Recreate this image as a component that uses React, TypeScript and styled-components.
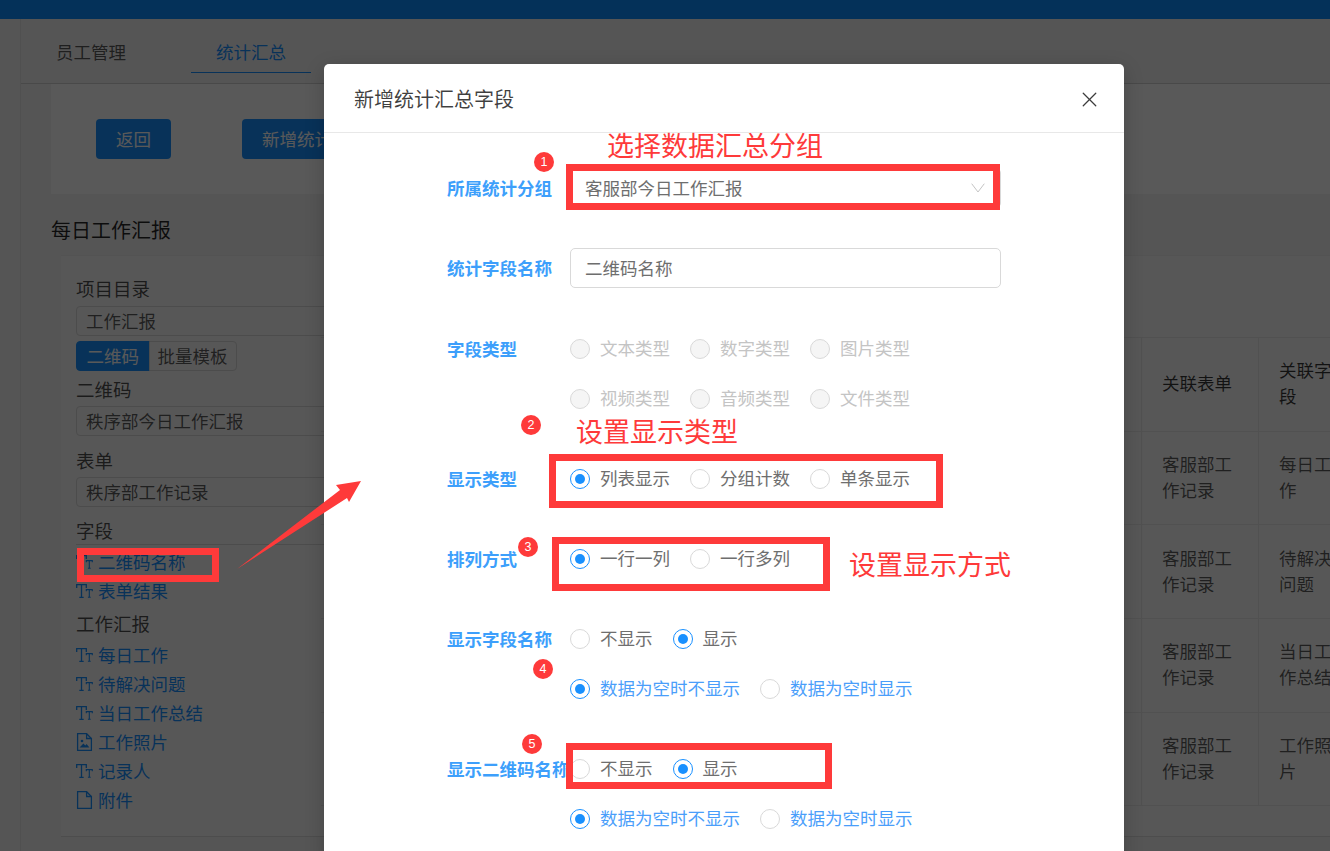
import React from 'react';
import styled, { createGlobalStyle } from 'styled-components';
import { X } from 'lucide-react';

const FONT = '"Noto Sans CJK SC", "Noto Sans", sans-serif';
const RED = '#fe3a3a';
const PRIMARY = '#1890ff';

const GlobalStyle = createGlobalStyle`
  html, body {
    margin: 0;
    padding: 0;
    background: #f4f4f4;
    font-family: ${FONT};
  }
  * { box-sizing: border-box; }
`;

const Page = styled.div`
  position: relative;
  width: 1330px;
  height: 851px;
  overflow: hidden;
  background: #f4f4f4;
  color: rgba(0, 0, 0, 0.65);
`;

const Mask = styled.div`
  position: absolute;
  inset: 0;
  background: rgba(0, 0, 0, 0.65);
`;

const TopBar = styled.div`
  height: 19px;
  background: #0e8eff;
`;

const Main = styled.div`
  margin-left: 20px;
  border-left: 1px solid #e4e4e4;
  height: 832px;
`;

const Tabs = styled.div`
  display: flex;
  gap: 40px;
  height: 65px;
  padding: 0 0 0 10px;
  border-bottom: 1px solid #d0d0d0;
`;

const Tab = styled.div<{ $active?: boolean }>`
  width: 120px;
  height: 54px;
  padding-top: 19px;
  font-size: 17.5px;
  line-height: 28px;
  text-align: center;
  color: ${p => (p.$active ? PRIMARY : 'rgba(0, 0, 0, 0.65)')};
  border-bottom: 1px solid ${p => (p.$active ? PRIMARY : 'transparent')};
`;

const Toolbar = styled.div`
  display: flex;
  gap: 71px;
  height: 110px;
  margin-left: 30px;
  padding: 35px 0 0 45px;
  background: #fff;
`;

const Button = styled.div`
  height: 40px;
  padding: 0 20px;
  flex: none;
  border-radius: 4px;
  background: ${PRIMARY};
  color: #fff;
  font-size: 17.5px;
  line-height: 40px;
`;

const SectionTitle = styled.div`
  height: 61px;
  margin-left: 30px;
  font-size: 20px;
  line-height: 72px;
  color: rgba(0, 0, 0, 0.85);
`;

const Board = styled.div`
  display: flex;
  height: 582px;
  margin-left: 40px;
  background: #fafafa;
  border-top: 1px solid #eee;
  border-bottom: 1px solid #ddd;
`;

const Tree = styled.div`
  width: 260px;
  flex: none;
  padding: 19px 0 0 15px;
`;

const TreeHeading = styled.div<{ $before?: number; $after?: number }>`
  margin-top: ${p => p.$before ?? 0}px;
  margin-bottom: ${p => p.$after ?? 0}px;
  font-size: 18.5px;
  line-height: 26px;
  color: rgba(0, 0, 0, 0.7);
`;

const TreeSelect = styled.div<{ $before?: number }>`
  width: 300px;
  height: 30px;
  margin-top: ${p => p.$before ?? 4}px;
  padding-left: 9px;
  border: 1px solid #d9d9d9;
  border-radius: 4px;
  font-size: 17.5px;
  line-height: 28px;
`;

const Segments = styled.div`
  display: flex;
  margin: 5px 0 5px;
`;

const Segment = styled.div<{ $active?: boolean }>`
  height: 30px;
  margin-left: ${p => (p.$active ? 0 : -1)}px;
  padding: 0 ${p => (p.$active ? 9.5 : 8)}px;
  font-size: 17.5px;
  line-height: 28px;
  color: ${p => (p.$active ? '#fff' : 'rgba(0, 0, 0, 0.65)')};
  background: ${p => (p.$active ? PRIMARY : 'transparent')};
  border: 1px solid ${p => (p.$active ? PRIMARY : '#d9d9d9')};
  border-radius: ${p => (p.$active ? '4px 0 0 4px' : '0 4px 4px 0')};
`;

const FieldRule = styled.div`
  width: 300px;
  height: 1px;
  margin-top: 1px;
  background: #d9d9d9;
`;

const FieldLink = styled.div<{ $height?: number }>`
  display: flex;
  align-items: center;
  gap: 5px;
  height: ${p => p.$height ?? 29}px;
  font-size: 17.5px;
  color: ${PRIMARY};
`;

const FieldSvg = styled.svg`
  width: 17px;
  height: 18px;
  flex: none;
  fill: none;
  stroke: currentColor;
`;

const TableArea = styled.div`
  flex: 1;
  padding-top: 81px;
  overflow: hidden;
`;

const Table = styled.div`
  display: grid;
  grid-template-columns: 821px 117px 100px;
  grid-auto-rows: 93.7px;
  width: 1038px;
`;

const Cell = styled.div<{ $head?: boolean }>`
  display: flex;
  align-items: center;
  padding: 0 20px 2px;
  border-top: 1px solid #e8e8e8;
  border-bottom: 1px solid #e8e8e8;
  border-right: 1px solid #e8e8e8;
  margin-bottom: -1px;
  font-size: 17.5px;
  line-height: 26px;
  color: ${p => (p.$head ? 'rgba(0, 0, 0, 0.78)' : 'rgba(0, 0, 0, 0.65)')};
`;

const Modal = styled.div`
  position: absolute;
  left: 324px;
  top: 64px;
  width: 800px;
  height: 800px;
  background: #fff;
  border-radius: 5px;
  box-shadow: 0 5px 20px rgba(0, 0, 0, 0.2);
`;

const ModalHeader = styled.div`
  display: flex;
  align-items: center;
  justify-content: space-between;
  height: 69px;
  padding: 0 22.5px 0 30px;
  border-bottom: 1px solid #e8e8e8;
  font-size: 20px;
  color: rgba(0, 0, 0, 0.75);
`;

const CloseIcon = styled(X)`
  margin-top: 3px;
  color: #3c3c3c;
`;

const ModalForm = styled.div`
  display: flex;
  flex-direction: column;
  gap: 40px;
  padding: 35px 0 0 123px;
`;

const FormRow = styled.div<{ $extra?: number }>`
  display: flex;
  margin-bottom: ${p => p.$extra ?? 0}px;
`;

const FormLabel = styled.div`
  width: 123px;
  flex: none;
  height: 40px;
  font-size: 17.5px;
  font-weight: 700;
  line-height: 39px;
  white-space: nowrap;
  color: #3d9ffb;
`;

const FormControl = styled.div`
  display: flex;
  flex-direction: column;
  gap: 10px;
  width: 431px;
`;

const TextBox = styled.div`
  display: flex;
  align-items: center;
  justify-content: space-between;
  height: 40px;
  padding: 0 15px 2px 14px;
  border: 1px solid #d9d9d9;
  border-radius: 5px;
  font-size: 17.5px;
  color: #6e6e6e;
`;

const Chevron = styled.svg`
  margin-top: 2px;
  fill: none;
  stroke: #c4c4c4;
`;

const RadioRow = styled.div`
  display: flex;
  align-items: center;
  height: 40px;
`;

const RadioItem = styled.div<{ $tone?: 'muted' | 'blue' }>`
  display: flex;
  align-items: center;
  margin-right: 20px;
  font-size: 17.5px;
  white-space: nowrap;
  color: ${p => (p.$tone === 'muted' ? '#c4c4c4' : p.$tone === 'blue' ? '#4a9efa' : '#6e6e6e')};
`;

const RadioText = styled.span`
  margin-top: -3px;
`;

const RadioDot = styled.span<{ $checked?: boolean; $disabled?: boolean }>`
  display: flex;
  align-items: center;
  justify-content: center;
  width: 20px;
  height: 20px;
  margin-right: 10px;
  border-radius: 50%;
  border: 1px solid ${p => (p.$checked ? PRIMARY : '#d9d9d9')};
  background: ${p => (p.$disabled ? '#f5f5f5' : '#fff')};

  &::after {
    content: '';
    display: ${p => (p.$checked ? 'block' : 'none')};
    width: 10px;
    height: 10px;
    border-radius: 50%;
    background: ${PRIMARY};
  }
`;

const RedBox = styled.div`
  position: absolute;
  border: 7px solid ${RED};
  pointer-events: none;
`;

const Badge = styled.div`
  position: absolute;
  width: 20px;
  height: 20px;
  border-radius: 50%;
  background: ${RED};
  color: #fff;
  font-family: "Liberation Sans", sans-serif;
  font-size: 12.5px;
  line-height: 20px;
  text-align: center;
`;

const Note = styled.div`
  position: absolute;
  font-size: 27px;
  line-height: 36px;
  white-space: nowrap;
  color: ${RED};
`;

const ArrowMark = styled.svg`
  position: absolute;
  left: 230px;
  top: 474px;
`;

type RadioOption = { label: string; checked?: boolean };
type Tone = 'muted' | 'blue';

const Radio = ({ label, checked, tone }: RadioOption & { tone?: Tone }) => (
  <RadioItem $tone={tone}>
    <RadioDot $checked={checked} $disabled={tone === 'muted'} />
    <RadioText>{label}</RadioText>
  </RadioItem>
);

const Radios = ({ options, tone }: { options: RadioOption[]; tone?: Tone }) => (
  <RadioRow>
    {options.map(o => (
      <Radio key={o.label} {...o} tone={tone} />
    ))}
  </RadioRow>
);

const TextTypeIcon = () => (
  <FieldSvg viewBox="0 0 17 18" strokeWidth="1.3">
    <path d="M0.7 6V2.7H10.3V6M5.5 2.7V15.3M3.3 15.3H7.7" />
    <path d="M10.3 9.2V7.6H16.3V9.2M13.3 7.6V15.3M11.9 15.3H14.7" strokeWidth="1.1" />
  </FieldSvg>
);

const ImageTypeIcon = () => (
  <FieldSvg viewBox="0 0 17 18" strokeWidth="1.3">
    <path d="M1.6 0.7H10.6L15.4 5.5V17.3H1.6Z" />
    <path d="M10.6 0.7V5.5H15.4" />
    <circle cx="6" cy="8" r="1.3" fill="currentColor" stroke="none" />
    <path d="M3.6 14.6L7.4 10.4L9.3 12.4L10.6 11L13.4 14.6Z" fill="currentColor" stroke="none" />
  </FieldSvg>
);

const FileTypeIcon = () => (
  <FieldSvg viewBox="0 0 17 18" strokeWidth="1.3">
    <path d="M1.6 0.7H10.6L15.4 5.5V17.3H1.6Z" />
    <path d="M10.6 0.7V5.5H15.4" />
  </FieldSvg>
);

const icons = { text: TextTypeIcon, image: ImageTypeIcon, file: FileTypeIcon };
type FieldKind = keyof typeof icons;

const FieldEntry = ({ name, kind, h }: { name: string; kind: FieldKind; h?: number }) => {
  const Icon = icons[kind];
  return (
    <FieldLink $height={h}>
      <Icon />
      {name}
    </FieldLink>
  );
};

const fields: { name: string; kind: FieldKind }[] = [
  { name: '每日工作', kind: 'text' },
  { name: '待解决问题', kind: 'text' },
  { name: '当日工作总结', kind: 'text' },
  { name: '工作照片', kind: 'image' },
  { name: '记录人', kind: 'text' },
  { name: '附件', kind: 'file' },
];

const tableRows = [
  ['关联表单', '关联字段'],
  ['客服部工作记录', '每日工作'],
  ['客服部工作记录', '待解决问题'],
  ['客服部工作记录', '当日工作总结'],
  ['客服部工作记录', '工作照片'],
];

const showFlags = [{ label: '不显示' }, { label: '显示', checked: true }];
const emptyFlags = [{ label: '数据为空时不显示', checked: true }, { label: '数据为空时显示' }];

const App = () => (
  <Page>
    <GlobalStyle />
    <TopBar />
    <Main>
      <Tabs>
        <Tab>员工管理</Tab>
        <Tab $active>统计汇总</Tab>
      </Tabs>
      <Toolbar>
        <Button>返回</Button>
        <Button>新增统计分组</Button>
      </Toolbar>
      <SectionTitle>每日工作汇报</SectionTitle>
      <Board>
        <Tree>
          <TreeHeading>项目目录</TreeHeading>
          <TreeSelect $before={5}>工作汇报</TreeSelect>
          <Segments>
            <Segment $active>二维码</Segment>
            <Segment>批量模板</Segment>
          </Segments>
          <TreeHeading>二维码</TreeHeading>
          <TreeSelect>秩序部今日工作汇报</TreeSelect>
          <TreeHeading $before={11}>表单</TreeHeading>
          <TreeSelect>秩序部工作记录</TreeSelect>
          <TreeHeading $before={10}>字段</TreeHeading>
          <FieldRule />
          <FieldEntry name="二维码名称" kind="text" h={33} />
          <FieldEntry name="表单结果" kind="text" h={25} />
          <TreeHeading $before={7} $after={4}>工作汇报</TreeHeading>
          {fields.map(f => (
            <FieldEntry key={f.name} {...f} />
          ))}
        </Tree>
        <TableArea>
          <Table>
            {tableRows.map((row, i) => (
              <React.Fragment key={i}>
                <Cell $head={i === 0} />
                {row.map(text => (
                  <Cell key={text} $head={i === 0}>
                    {text}
                  </Cell>
                ))}
              </React.Fragment>
            ))}
          </Table>
        </TableArea>
      </Board>
    </Main>

    <Mask />

    <Modal>
      <ModalHeader>
        新增统计汇总字段
        <CloseIcon size={25} strokeWidth={1.2} />
      </ModalHeader>
      <ModalForm>
        <FormRow>
          <FormLabel>所属统计分组</FormLabel>
          <FormControl>
            <TextBox>
              客服部今日工作汇报
              <Chevron width="14" height="10" viewBox="0 0 14 10" strokeWidth="1">
                <polyline points="0.7,0.7 7,9 13.3,0.7" />
              </Chevron>
            </TextBox>
          </FormControl>
        </FormRow>
        <FormRow $extra={1}>
          <FormLabel>统计字段名称</FormLabel>
          <FormControl>
            <TextBox>二维码名称</TextBox>
          </FormControl>
        </FormRow>
        <FormRow>
          <FormLabel>字段类型</FormLabel>
          <FormControl>
            <Radios tone="muted" options={[{ label: '文本类型' }, { label: '数字类型' }, { label: '图片类型' }]} />
            <Radios tone="muted" options={[{ label: '视频类型' }, { label: '音频类型' }, { label: '文件类型' }]} />
          </FormControl>
        </FormRow>
        <FormRow>
          <FormLabel>显示类型</FormLabel>
          <FormControl>
            <Radios options={[{ label: '列表显示', checked: true }, { label: '分组计数' }, { label: '单条显示' }]} />
          </FormControl>
        </FormRow>
        <FormRow>
          <FormLabel>排列方式</FormLabel>
          <FormControl>
            <Radios options={[{ label: '一行一列', checked: true }, { label: '一行多列' }]} />
          </FormControl>
        </FormRow>
        <FormRow>
          <FormLabel>显示字段名称</FormLabel>
          <FormControl>
            <Radios options={showFlags} />
            <Radios tone="blue" options={emptyFlags} />
          </FormControl>
        </FormRow>
        <FormRow>
          <FormLabel>显示二维码名称</FormLabel>
          <FormControl>
            <Radios options={showFlags} />
            <Radios tone="blue" options={emptyFlags} />
          </FormControl>
        </FormRow>
      </ModalForm>
    </Modal>

    <RedBox style={{ left: 77, top: 548, width: 142, height: 34 }} />
    <RedBox style={{ left: 566, top: 164, width: 434, height: 46 }} />
    <RedBox style={{ left: 549, top: 454, width: 394, height: 54 }} />
    <RedBox style={{ left: 552, top: 537, width: 278, height: 54 }} />
    <RedBox style={{ left: 566, top: 743, width: 266, height: 46 }} />

    <Badge style={{ left: 534, top: 152 }}>1</Badge>
    <Badge style={{ left: 521, top: 415 }}>2</Badge>
    <Badge style={{ left: 518, top: 537 }}>3</Badge>
    <Badge style={{ left: 533, top: 659 }}>4</Badge>
    <Badge style={{ left: 522, top: 734 }}>5</Badge>

    <Note style={{ left: 607, top: 127 }}>选择数据汇总分组</Note>
    <Note style={{ left: 576, top: 413 }}>设置显示类型</Note>
    <Note style={{ left: 849, top: 546 }}>设置显示方式</Note>

    <ArrowMark width="140" height="105" viewBox="0 0 140 105">
      <polygon points="7,95 110,16 106,11 131,7 119,28 117,24" fill={RED} />
    </ArrowMark>
  </Page>
);

export default App;
